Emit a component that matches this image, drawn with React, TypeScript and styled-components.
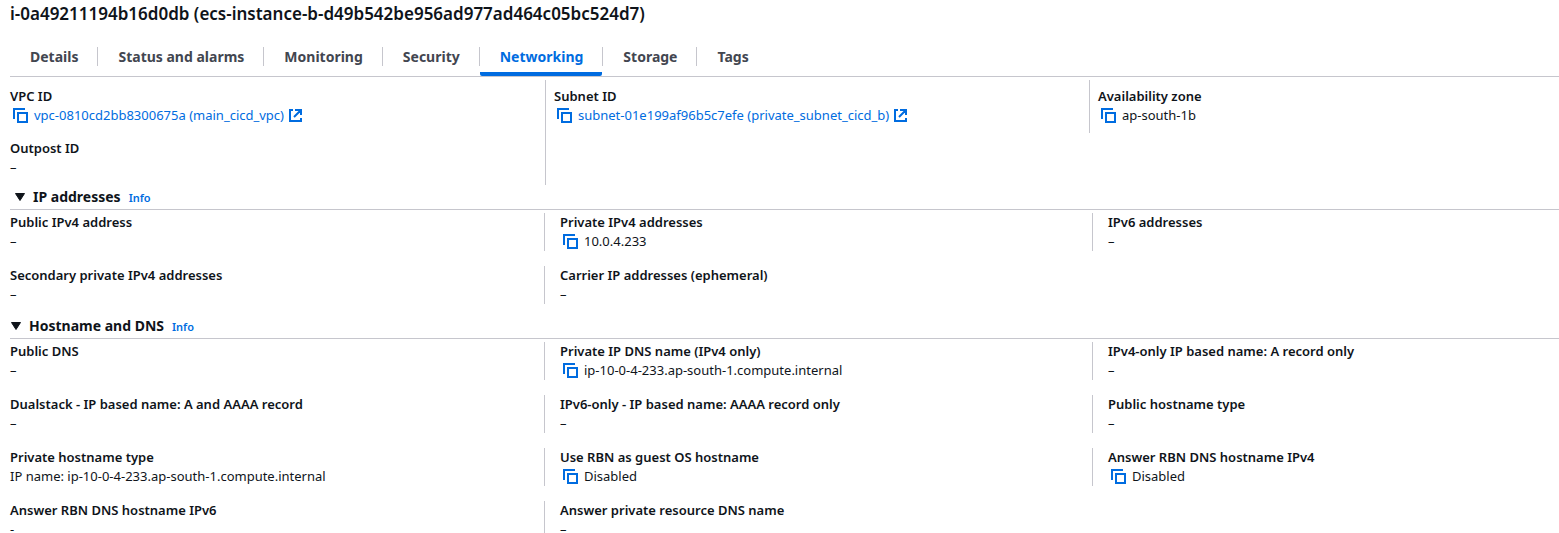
import React from "react";
import styled, { createGlobalStyle } from "styled-components";

const blue = "#006ce0";
const ink = "#0f141a";
const line = "#c6c6cd";

const GlobalStyle = createGlobalStyle`
  * { box-sizing: border-box; }
  body {
    margin: 0;
    background: #fff;
    color: ${ink};
    font-family: "Noto Sans", "Open Sans", sans-serif;
    font-size: 13px;
    line-height: 19px;
  }
`;

const Page = styled.main`
  padding-left: 10px;
  height: 100vh;
  overflow-x: hidden;
  overflow-y: auto;
  scrollbar-width: none;
`;

const Title = styled.h1`
  margin: 0;
  padding-top: 4px;
  font-size: 17px;
  line-height: 20px;
  font-weight: 600;
`;

const TabBar = styled.div`
  display: flex;
  align-items: flex-end;
  height: 53px;
  border-bottom: 1px solid ${line};
`;

const TabSlot = styled.div`
  display: flex;
  align-items: flex-start;
  height: 29px;
  & + & {
    background: linear-gradient(${line}, ${line}) left top / 1px 19px no-repeat;
    padding-left: 1px;
  }
`;

const Tab = styled.button<{ $active?: boolean }>`
  height: 29px;
  padding: 0 19px 9px 20px;
  border: 0;
  background: ${(p) =>
    p.$active ? `linear-gradient(${blue}, ${blue}) bottom / 100% 4px no-repeat` : "none"};
  border-radius: 2px;
  color: ${(p) => (p.$active ? blue : "#424650")};
  font: 700 14px/20px "Noto Sans", "Open Sans", sans-serif;
  white-space: nowrap;
`;

const Summary = styled.dl`
  display: grid;
  grid-template-columns: 535fr 544fr 470fr;
  margin: 3px 0 0;
`;

const SummaryColumn = styled.div`
  display: flex;
  flex-direction: column;
  gap: 14px;
  align-self: start;
  padding: 7px 0 8px;
  & + & {
    padding-left: 8px;
    border-left: 1px solid ${line};
  }
  &:nth-child(2) {
    align-self: stretch;
  }
`;

const SectionHeader = styled.div<{ $inset: number }>`
  display: flex;
  align-items: center;
  gap: 8px;
  height: 25px;
  padding-left: ${(p) => p.$inset}px;
  border-bottom: 1px solid ${line};
`;

const Disclosure = styled.button`
  display: flex;
  align-items: center;
  gap: 8px;
  padding: 0;
  border: 0;
  background: none;
  color: ${ink};
  font: 700 14px/20px "Noto Sans", "Open Sans", sans-serif;
`;

const InfoLink = styled.a`
  padding-top: 1px;
  color: ${blue};
  font-size: 11px;
  font-weight: 600;
  text-decoration: none;
`;

const FieldGrid = styled.dl`
  display: grid;
  grid-template-columns: 534fr 548fr 467fr;
  row-gap: 15px;
  margin: 3px 0 10px;
`;

const FieldCell = styled.div`
  height: 38px;
  &:not(:nth-child(3n + 1)) {
    padding-left: 15px;
    border-left: 1px solid ${line};
  }
`;

const Label = styled.dt`
  font-weight: 600;
  white-space: nowrap;
`;

const Value = styled.dd`
  display: flex;
  align-items: center;
  gap: 6px;
  margin: 0;
  white-space: nowrap;
`;

const CopyButton = styled.button`
  display: flex;
  margin-left: 3px;
  padding: 0;
  border: 0;
  background: none;
`;

const ValueLink = styled.a`
  display: flex;
  align-items: center;
  gap: 5px;
  color: ${blue};
  text-decoration: none;
`;

const CopyIcon = () => (
  <svg width="15" height="15" viewBox="0 0 15 15" fill="none" stroke={blue} strokeWidth="2" aria-hidden="true">
    <path d="M1 11V1H12" />
    <rect x="5" y="5" width="9" height="9" />
  </svg>
);

const ExternalIcon = () => (
  <svg width="13" height="13" viewBox="0 0 13 13" fill="none" stroke={blue} strokeWidth="2" aria-hidden="true">
    <path d="M4 1H1V12H12V9M6 1H12V6M12 1L5 8" />
  </svg>
);

const Caret = () => (
  <svg width="10" height="8" viewBox="0 0 10 8" aria-hidden="true">
    <path d="M0.5 0.5H9.5L5 7.5Z" fill={ink} stroke={ink} strokeLinejoin="round" />
  </svg>
);

type FieldData = { label: string; value?: string; copy?: boolean; link?: boolean };

const Field = ({ label, value = "–", copy, link }: FieldData) => (
  <>
    <Label>{label}</Label>
    <Value>
      {copy && (
        <CopyButton type="button" aria-label={`Copy ${label}`}>
          <CopyIcon />
        </CopyButton>
      )}
      {link ? (
        <ValueLink href="#">
          {value}
          <ExternalIcon />
        </ValueLink>
      ) : (
        value
      )}
    </Value>
  </>
);

const tabs = ["Details", "Status and alarms", "Monitoring", "Security", "Networking", "Storage", "Tags"];

const summary: FieldData[][] = [
  [
    { label: "VPC ID", value: "vpc-0810cd2bb8300675a (main_cicd_vpc)", copy: true, link: true },
    { label: "Outpost ID" },
  ],
  [{ label: "Subnet ID", value: "subnet-01e199af96b5c7efe (private_subnet_cicd_b)", copy: true, link: true }],
  [{ label: "Availability zone", value: "ap-south-1b", copy: true }],
];

const sections: { title: string; inset: number; fields: FieldData[] }[] = [
  {
    title: "IP addresses",
    inset: 5,
    fields: [
      { label: "Public IPv4 address" },
      { label: "Private IPv4 addresses", value: "10.0.4.233", copy: true },
      { label: "IPv6 addresses" },
      { label: "Secondary private IPv4 addresses" },
      { label: "Carrier IP addresses (ephemeral)" },
    ],
  },
  {
    title: "Hostname and DNS",
    inset: 1,
    fields: [
      { label: "Public DNS" },
      { label: "Private IP DNS name (IPv4 only)", value: "ip-10-0-4-233.ap-south-1.compute.internal", copy: true },
      { label: "IPv4-only IP based name: A record only" },
      { label: "Dualstack - IP based name: A and AAAA record" },
      { label: "IPv6-only - IP based name: AAAA record only" },
      { label: "Public hostname type" },
      { label: "Private hostname type", value: "IP name: ip-10-0-4-233.ap-south-1.compute.internal" },
      { label: "Use RBN as guest OS hostname", value: "Disabled", copy: true },
      { label: "Answer RBN DNS hostname IPv4", value: "Disabled", copy: true },
      { label: "Answer RBN DNS hostname IPv6", value: "-" },
      { label: "Answer private resource DNS name" },
    ],
  },
];

export default function App() {
  return (
    <Page>
      <GlobalStyle />
      <Title>i-0a49211194b16d0db (ecs-instance-b-d49b542be956ad977ad464c05bc524d7)</Title>
      <TabBar role="tablist">
        {tabs.map((name) => (
          <TabSlot key={name} role="presentation">
            <Tab type="button" role="tab" aria-selected={name === "Networking"} $active={name === "Networking"}>
              {name}
            </Tab>
          </TabSlot>
        ))}
      </TabBar>
      <Summary>
        {summary.map((column) => (
          <SummaryColumn key={column[0].label}>
            {column.map((f) => (
              <div key={f.label}>
                <Field {...f} />
              </div>
            ))}
          </SummaryColumn>
        ))}
      </Summary>
      {sections.map((s) => (
        <section key={s.title}>
          <SectionHeader $inset={s.inset}>
            <Disclosure type="button" aria-expanded="true">
              <Caret />
              {s.title}
            </Disclosure>
            <InfoLink href="#">Info</InfoLink>
          </SectionHeader>
          <FieldGrid>
            {s.fields.map((f) => (
              <FieldCell key={f.label}>
                <Field {...f} />
              </FieldCell>
            ))}
          </FieldGrid>
        </section>
      ))}
    </Page>
  );
}
